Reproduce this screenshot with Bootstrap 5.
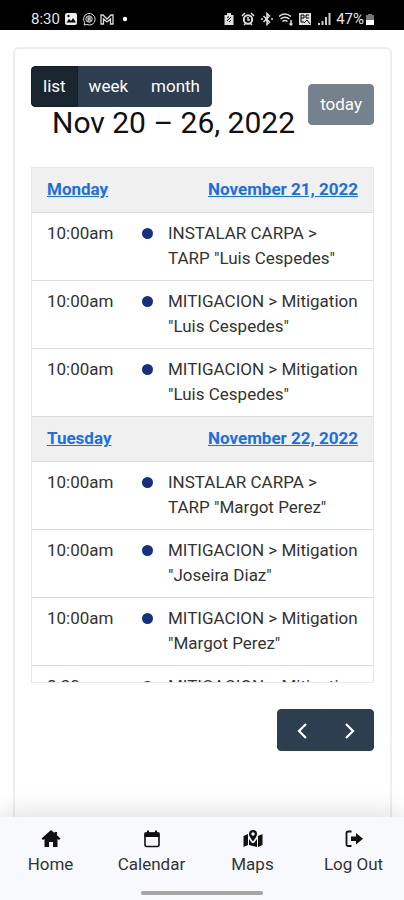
<!DOCTYPE html>
<html lang="en">
<head>
<meta charset="utf-8">
<meta name="viewport" content="width=device-width, initial-scale=1">
<title>Calendar</title>
<link href="https://cdn.jsdelivr.net/npm/bootstrap@5.3.0/dist/css/bootstrap.min.css" rel="stylesheet">
<style>
body { font-family: Roboto, "Liberation Sans", sans-serif; font-size: 17px; line-height: 25px; color: #212529; background: #fff; }
.status { height: 30px; padding: 8px 28px 0 31px; background: #000; color: #e4e4e4; font-size: 15px; line-height: 22px; }
.status svg { width: 14px; height: 14px; }
.status .signals { gap: 5px; }
.status .battery { width: 12px; }
.panel { margin: 17px 12px 0 13px; padding: 17px 16px; border: 2px solid #eee; border-bottom: 0; border-radius: 6px 6px 0 0; }
.cal-btn { --bs-btn-color: #fff; --bs-btn-bg: #2c3e50; --bs-btn-border-color: #2c3e50; --bs-btn-hover-color: #fff; --bs-btn-hover-bg: #1e2b37; --bs-btn-hover-border-color: #151e27; --bs-btn-active-color: #fff; --bs-btn-active-bg: #1a252f; --bs-btn-active-border-color: #151e27; --bs-btn-disabled-color: #fff; --bs-btn-disabled-bg: #2c3e50; --bs-btn-disabled-border-color: #2c3e50; --bs-btn-padding-x: 11px; --bs-btn-padding-y: 7px; --bs-btn-font-size: 17px; --bs-btn-line-height: 25px; --bs-btn-border-radius: 4px; }
.cal-title { margin: 0 0 0 21px; padding-bottom: 3px; font-size: 30px; line-height: 32px; font-weight: 400; color: #111; }
.agenda { height: 516px; margin-top: 25px; border: 1px solid #e8e8e8; overflow: hidden; }
.agenda table { width: 100%; border-collapse: separate; border-spacing: 0; }
.agenda th, .agenda td { padding: 8px 12px 9px 15px; border-bottom: 1px solid #ddd; vertical-align: top; color: #333; }
.agenda th { padding: 9px 15px 10px; background: #f0f0f0; font-weight: 700; }
.agenda th a { color: #1a6fe8; }
.agenda .time { width: 95px; white-space: nowrap; }
.agenda .marker { width: 41px; padding-left: 15px; padding-right: 15px; }
.agenda td:last-child { padding-left: 0; }
.event-dot { display: block; width: 11px; height: 11px; margin-top: 7px; border-radius: 50%; background: #14307f; }
.pager { margin-top: 26px; }
.pager .btn { width: 49px; height: 42px; padding: 0; }
.pager svg { width: 20px; height: 20px; }
.tabs { background: #f8f9fc; box-shadow: 0 -4px 24px rgba(0,0,0,.13); }
.tabs a { padding-top: 12px; color: #333; font-size: 17px; line-height: 24px; }
.tabs svg { width: 20px; height: 20px; color: #111; margin-bottom: 3px; }
.home-bar { width: 122px; height: 4px; margin: 15px auto 5px; border-radius: 2px; background: #a5a5a5; }
</style>
<script src="https://cdn.jsdelivr.net/npm/bootstrap@5.3.0/dist/js/bootstrap.bundle.min.js"></script>
</head>
<body class="d-flex flex-column vh-100 overflow-hidden">
<header class="status d-flex justify-content-between flex-shrink-0">
  <div class="d-flex align-items-center gap-1">
    <span>8:30</span>
    <svg viewBox="0 0 14 14"><rect x="1" y="1" width="12" height="12" rx="2" fill="#eee"/><path d="M2.5 10.5 5 7l2 2 2-3 3 4.500z" fill="#000"/><circle cx="4.500" cy="4" r="1.200" fill="#000"/></svg>
    <svg viewBox="0 0 14 14" fill="none" stroke="#ddd"><path d="M2 13l.8-2.200A5.800 5.800 0 1 1 5 12.500z"/><circle cx="7" cy="7" r="3.200"/><path d="M6 5v4h1.500a1 1 0 0 0 0-2H6h1.400a1 1 0 0 0 0-2z"/></svg>
    <svg viewBox="0 0 14 14" fill="none" stroke="#ddd" stroke-width="1.300"><path d="M1 12V3h2l4 4 4-4h2v9h-2.500V7L7 10 3.500 7v5z"/></svg>
    <svg viewBox="0 0 14 14"><circle cx="7" cy="7" r="2.200" fill="#fff"/></svg>
  </div>
  <div class="signals d-flex align-items-center">
    <svg viewBox="0 0 14 14"><path d="M5 1h4v2h2.500v10h-9V3H5z" fill="#ddd"/><path d="M5 9l4-4M5 6l2-1.500M9 8l-2 2" stroke="#000" fill="none"/></svg>
    <svg viewBox="0 0 14 14"><circle cx="7" cy="7.500" r="4.200" fill="none" stroke="#ddd" stroke-width="2"/><path d="M1 4l3-3M13 4l-3-3M3 13l2-2M11 13l-2-2M7 5v3h2" stroke="#ddd" stroke-width="1.500" fill="none"/></svg>
    <svg viewBox="0 0 14 14"><path d="M3.500 4l6 6L7 12.500v-11L9.500 4l-6 6M1 7h2M11 7h2" stroke="#ddd" stroke-width="1.500" fill="none"/></svg>
    <svg viewBox="0 0 14 14"><path d="M0 4.500q6-5 12 0M1.500 7q4.500-3.500 9 0M3.500 9.500q2.500-2 5 0M6 12h.1M12 8v5M10.500 11.500L12 13l1.500-1.500" stroke="#ddd" stroke-width="1.500" fill="none"/></svg>
    <svg viewBox="0 0 14 14"><rect x="1" y="1" width="12" height="12" fill="#ddd"/><path d="M3 3v7h3M3 3h3v3H3M8 3h3M8 3v3h3M6 11l3-3 3 4" stroke="#000" fill="none"/></svg>
    <svg viewBox="0 0 14 14"><path d="M2 13v-2M5.500 13V9M9 13V5M12.500 13V1" stroke="#ccc" stroke-width="2"/></svg>
    <span class="d-flex align-items-center">47%<svg class="battery" viewBox="0 0 12 14"><path d="M3 3h1V2h4v1h2v5H2V3z" fill="#777"/><path d="M2 8h8v5H2z" fill="#fff"/></svg></span>
  </div>
</header>
<main class="flex-grow-1 overflow-hidden d-flex flex-column">
  <section class="panel flex-grow-1">
    <div class="d-flex justify-content-between align-items-center">
      <div>
        <div class="btn-group" role="group" aria-label="View">
          <button type="button" class="btn cal-btn active">list</button>
          <button type="button" class="btn cal-btn">week</button>
          <button type="button" class="btn cal-btn">month</button>
        </div>
        <h2 class="cal-title text-nowrap">Nov 20 – 26, 2022</h2>
      </div>
      <button type="button" class="btn cal-btn" disabled>today</button>
    </div>
    <div class="agenda">
      <table>
        <tbody>
          <tr><th colspan="3" scope="colgroup"><div class="d-flex justify-content-between"><a href="#">Monday</a><a href="#">November 21, 2022</a></div></th></tr>
          <tr><td class="time">10:00am</td><td class="marker"><span class="event-dot"></span></td><td>INSTALAR CARPA &gt; TARP "Luis Cespedes"</td></tr>
          <tr><td class="time">10:00am</td><td class="marker"><span class="event-dot"></span></td><td>MITIGACION &gt; Mitigation "Luis Cespedes"</td></tr>
          <tr><td class="time">10:00am</td><td class="marker"><span class="event-dot"></span></td><td>MITIGACION &gt; Mitigation "Luis Cespedes"</td></tr>
          <tr><th colspan="3" scope="colgroup"><div class="d-flex justify-content-between"><a href="#">Tuesday</a><a href="#">November 22, 2022</a></div></th></tr>
          <tr><td class="time">10:00am</td><td class="marker"><span class="event-dot"></span></td><td>INSTALAR CARPA &gt; TARP "Margot Perez"</td></tr>
          <tr><td class="time">10:00am</td><td class="marker"><span class="event-dot"></span></td><td>MITIGACION &gt; Mitigation "Joseira Diaz"</td></tr>
          <tr><td class="time">10:00am</td><td class="marker"><span class="event-dot"></span></td><td>MITIGACION &gt; Mitigation "Margot Perez"</td></tr>
          <tr><td class="time">8:30am</td><td class="marker"><span class="event-dot"></span></td><td>MITIGACION &gt; Mitigation</td></tr>
        </tbody>
      </table>
    </div>
    <div class="pager d-flex justify-content-end">
      <div class="btn-group" role="group" aria-label="Navigate">
        <button type="button" class="btn cal-btn" aria-label="Previous"><svg viewBox="0 0 20 20" fill="none" stroke="currentColor" stroke-width="2.200"><path d="M14 3l-7 7 7 7"/></svg></button>
        <button type="button" class="btn cal-btn" aria-label="Next"><svg viewBox="0 0 20 20" fill="none" stroke="currentColor" stroke-width="2.200"><path d="M6 3l7 7-7 7"/></svg></button>
      </div>
    </div>
  </section>
</main>
<footer class="tabs flex-shrink-0 position-relative">
  <nav class="row g-0 text-center" aria-label="Main">
    <a class="col d-flex flex-column align-items-center text-decoration-none" href="#"><svg viewBox="0 0 20 20" fill="currentColor"><path d="M10 1L.5 9.500 2 11l1.500-1V18H8v-5h4v5h4.500v-8l1.500 1 1.500-1.500L16 6.200V3h-2.500v1z"/></svg>Home</a>
    <a class="col d-flex flex-column align-items-center text-decoration-none" href="#"><svg viewBox="0 0 20 20"><rect x="3" y="4" width="14" height="13.500" rx="1.500" fill="none" stroke="currentColor" stroke-width="1.600"/><path d="M2.500 3.500h15V8h-15zM5 1.500h2V4H5zM13 1.500h2V4h-2z" fill="currentColor"/></svg>Calendar</a>
    <a class="col d-flex flex-column align-items-center text-decoration-none" href="#"><svg viewBox="0 0 20 20" fill="currentColor"><path d="M.5 7L5 5v11L.5 18zM15 7l4.500-2v11L15 18zM6 10l3 4h2l3-4v8l-8-2z"/><path fill-rule="evenodd" d="M10 1a4 4 0 0 1 4 4c0 2-2 5-4 7.500C8 10 6 7 6 5a4 4 0 0 1 4-4zm0 2.300a1.700 1.700 0 1 0 0 3.400 1.700 1.700 0 0 0 0-3.400z"/></svg>Maps</a>
    <a class="col d-flex flex-column align-items-center text-decoration-none" href="#"><svg viewBox="0 0 20 20"><path d="M7.500 2.500H4Q2.500 2.500 2.500 4v11.500Q2.500 17 4 17h3.500" fill="none" stroke="currentColor" stroke-width="1.800"/><path d="M7 7.500h5V4l7 5.700-7 5.800V12H7z" fill="currentColor"/></svg>Log Out</a>
  </nav>
  <div class="home-bar"></div>
</footer>
</body>
</html>
